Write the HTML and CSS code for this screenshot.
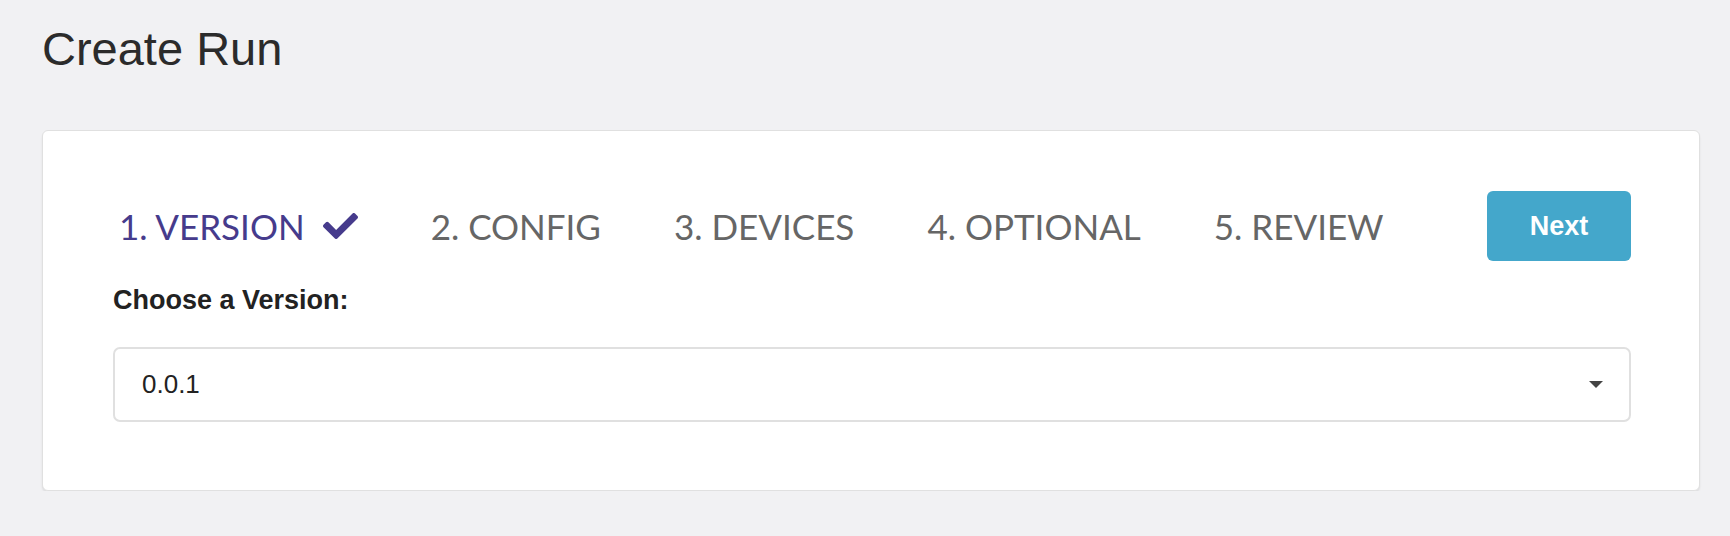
FILE: index.html
```html
<!DOCTYPE html>
<html lang="en">
<head>
<meta charset="utf-8">
<title>Create Run</title>
<link rel="stylesheet" href="styles.css">
</head>
<body>
<div class="page">
  <h1 class="title">Create Run</h1>
  <div class="card">
    <div class="steps-row">
      <ol class="steps">
        <li class="step done">1. VERSION
          <svg class="check" viewBox="0 72 512 368" width="35" height="26" aria-hidden="true"><path fill="currentColor" d="M173.898 439.404l-166.4-166.4c-9.997-9.997-9.997-26.206 0-36.204l36.203-36.204c9.997-9.998 26.207-9.998 36.204 0L192 312.69 432.095 72.596c9.997-9.997 26.207-9.997 36.204 0l36.203 36.204c9.997 9.997 9.997 26.206 0 36.204l-294.4 294.401c-9.998 9.997-26.207 9.997-36.204-.001z"/></svg>
        </li>
        <li class="step">2. CONFIG</li>
        <li class="step">3. DEVICES</li>
        <li class="step">4. OPTIONAL</li>
        <li class="step">5. REVIEW</li>
      </ol>
      <button class="btn-next" type="button">Next</button>
    </div>
    <div class="label">Choose a Version:</div>
    <div class="select">
      <span class="select-value">0.0.1</span>
      <span class="caret"></span>
    </div>
  </div>
</div>
</body>
</html>
```
FILE: styles.css
```css
html, body {
  margin: 0;
  padding: 0;
  background: #f1f1f3;
}
body {
  font-family: "Liberation Sans", Arial, sans-serif;
}
.page {
  padding: 0 30px 0 42px;
}
.title {
  margin: 0;
  padding-top: 21px;
  font-size: 47px;
  line-height: 56px;
  font-weight: 400;
  color: #2b2b2b;
}
.card {
  margin-top: 53px;
  background: #fff;
  border: 1px solid #e0e0e0;
  border-radius: 6px;
  box-shadow: 0 2px 2px rgba(0, 0, 0, 0.08);
  padding: 60px 68px 68px 70px;
}
.steps-row {
  display: flex;
  align-items: center;
  height: 70px;
}
.steps {
  display: flex;
  align-items: center;
  gap: 73px;
  list-style: none;
  margin: 0 0 0 6px;
  padding: 0;
  font-family: Lato, "Open Sans", sans-serif;
  font-size: 35px;
  color: #666666;
}
.step {
  display: flex;
  align-items: center;
  white-space: nowrap;
}
.step.done {
  color: #463b8c;
}
.check {
  margin-left: 18px;
  display: block;
}
.btn-next {
  margin-left: auto;
  width: 144px;
  height: 70px;
  border: none;
  border-radius: 6px;
  background: #44a7cb;
  color: #fff;
  font-family: "Liberation Sans", Arial, sans-serif;
  font-weight: 700;
  font-size: 27px;
  padding: 0;
}
.label {
  margin-top: 23px;
  font-size: 27px;
  line-height: 32px;
  font-weight: 700;
  color: #222;
}
.select {
  margin-top: 31px;
  height: 71px;
  border: 2px solid #e0e0e0;
  border-radius: 7px;
  display: flex;
  align-items: center;
  padding: 0 26px 0 27px;
}
.select-value {
  font-size: 26px;
  color: #222;
}
.caret {
  margin-left: auto;
  width: 0;
  height: 0;
  border-left: 7px solid transparent;
  border-right: 7px solid transparent;
  border-top: 7px solid #444;
}
```
